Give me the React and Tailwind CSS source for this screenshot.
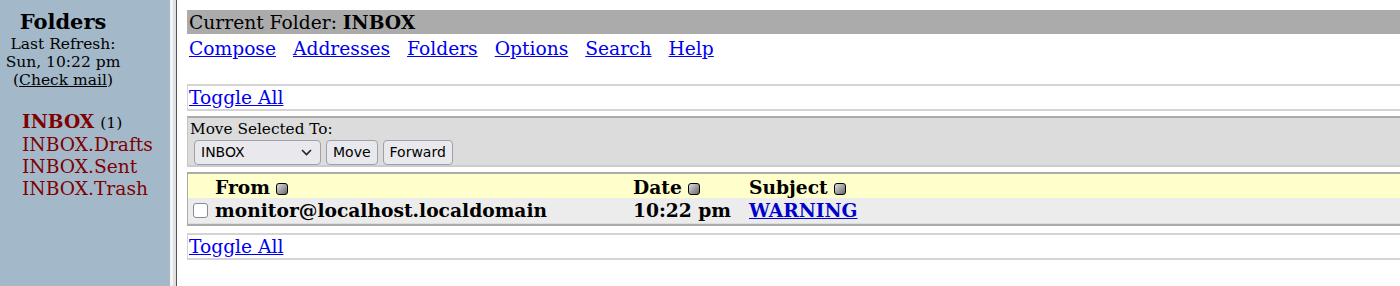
import React from "react";

const folders = ["INBOX.Drafts", "INBOX.Sent", "INBOX.Trash"];
const links = ["Compose", "Addresses", "Folders", "Options", "Search", "Help"];

function SortIcon() {
    return (
        <span className="inline-block w-[12px] h-[12px] ml-[6px] align-[-1px] rounded-[3px] border border-black bg-gradient-to-br from-[#e0e0e0] to-[#6a6a6a]"></span>
    );
}

function ToggleBox() {
    return (
        <div className="h-[27px] border-t-2 border-b-2 border-l border-[#d4d4d4] pl-[1px] leading-[23px]">
            <a href="#" className="text-[#0000ee] underline">Toggle All</a>
        </div>
    );
}

export default function App() {
    return (
        <div className="flex w-[1400px] h-[286px] overflow-hidden bg-white font-['DejaVu_Serif',serif] text-black">
            {/* left frame */}
            <div className="w-[170px] shrink-0 bg-[#a3b9ca] flex flex-col">
                <div className="w-[126px] text-center pt-[9px]">
                    <div className="text-[21px] font-bold leading-[25px]">Folders</div>
                    <div className="text-[15.5px] leading-[18px] mt-[1px]">Last Refresh:</div>
                    <div className="text-[15.5px] leading-[18px]">Sun, 10:22 pm</div>
                    <div className="text-[15.5px] leading-[18px]">
                        (<a href="#" className="underline">Check mail</a>)
                    </div>
                </div>
                <div className="pl-[22px] mt-[21px] text-[18.67px] leading-[22px] text-[#800000]">
                    <div>
                        <span className="font-bold">INBOX</span>{" "}
                        <span className="text-[15.5px] text-black">(1)</span>
                    </div>
                    {folders.map((f) => (
                        <div key={f}>{f}</div>
                    ))}
                </div>
            </div>

            {/* frame border */}
            <div className="w-[3px] shrink-0 bg-[#f4f4f4]"></div>
            <div className="w-[3px] shrink-0 bg-[#e0e0e0]"></div>
            <div className="w-[1px] shrink-0 bg-[#555555]"></div>

            {/* right frame */}
            <div className="flex-1 pt-[10px] pl-[10px] text-[18.67px]">
                <div className="h-[24px] bg-[#ababab] pl-[2px] leading-[24px]">
                    Current Folder: <span className="font-bold">INBOX</span>
                </div>
                <div className="flex gap-[17px] pl-[2px] h-[26px] leading-[29px]">
                    {links.map((l) => (
                        <a key={l} href="#" className="text-[#0000ee] underline">{l}</a>
                    ))}
                </div>

                <div className="mt-[24px]">
                    <ToggleBox />
                </div>

                {/* move selected */}
                <div className="mt-[5px] h-[51px] bg-[#dcdcdc] border-t-2 border-[#ababab] border-b-2 border-b-[#cccccc] border-l border-l-[#c4c4c4] pl-[2px]">
                    <div className="text-[15.3px] leading-[20px] mt-[1px]">Move Selected To:</div>
                    <div className="flex gap-[5px] pl-[4px] font-['DejaVu_Sans',sans-serif] text-[14px] mt-[1px]">
                        <div className="w-[127px] h-[25px] rounded-[4px] border border-[#a0a0a8] bg-[#e9e9ed] flex items-center justify-between pl-[6px] pr-[8px]">
                            <span>INBOX</span>
                            <svg width="11" height="7" viewBox="0 0 11 7" fill="none" stroke="#222" strokeWidth="1.6">
                                <path d="M1 1l4.5 4.5L10 1" />
                            </svg>
                        </div>
                        <div className="h-[25px] rounded-[4px] border border-[#a0a0a8] bg-[#e9e9ed] px-[6px] leading-[23px]">Move</div>
                        <div className="h-[25px] rounded-[4px] border border-[#a0a0a8] bg-[#e9e9ed] px-[6px] leading-[23px]">Forward</div>
                    </div>
                </div>

                {/* message list */}
                <div className="mt-[5px] border-t-2 border-b-2 border-l border-[#ababab] font-bold">
                    <div className="flex h-[24px] bg-[#ffffcc] leading-[26px]">
                        <div className="w-[27px]"></div>
                        <div className="w-[418px]">From<SortIcon /></div>
                        <div className="w-[116px]">Date<SortIcon /></div>
                        <div>Subject<SortIcon /></div>
                    </div>
                    <div className="flex h-[26px] bg-[#ececec] leading-[25px] border-b border-[#dddddd]">
                        <div className="w-[27px] flex items-center pl-[5px]">
                            <span className="w-[15px] h-[15px] rounded-[3px] border border-[#8a8a96] bg-white"></span>
                        </div>
                        <div className="w-[418px]">monitor@localhost.localdomain</div>
                        <div className="w-[116px]">10:22 pm</div>
                        <div>
                            <a href="#" className="text-[#0000cc] underline">WARNING</a>
                        </div>
                    </div>
                </div>

                <div className="mt-[7px]">
                    <ToggleBox />
                </div>
            </div>
        </div>
    );
}
